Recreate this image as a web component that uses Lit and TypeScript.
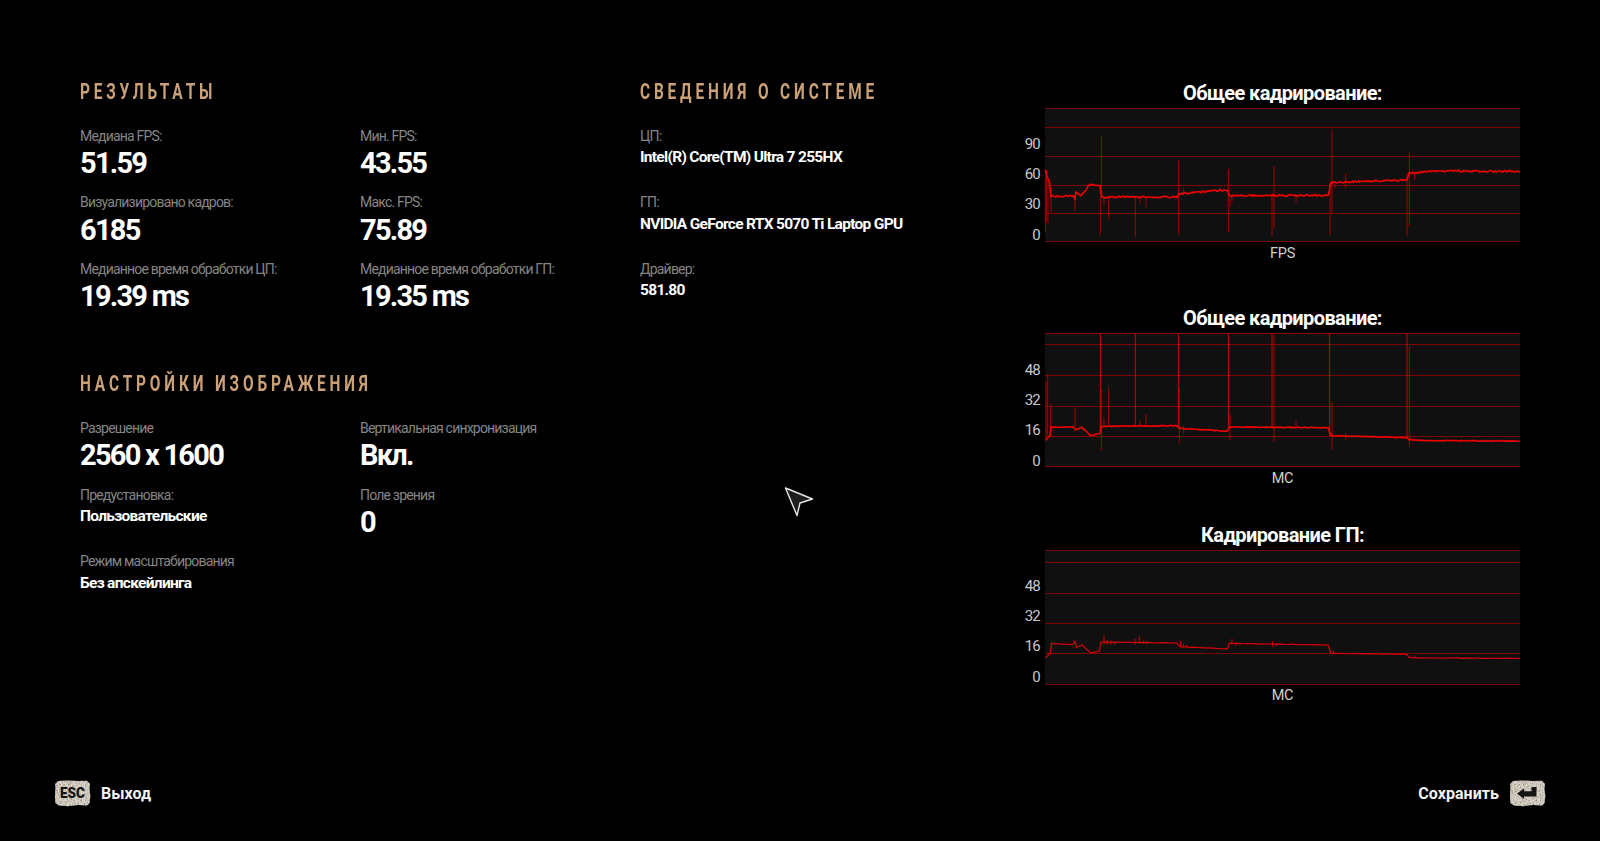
import { LitElement, css, html, svg } from 'lit';
import { customElement } from 'lit/decorators.js';

type Pt = [number, number];
type Spike = [number, number, number];

interface ChartData {
  title: string;
  unit: string;
  grid: number[];
  ticks: [string, number][];
  line: Pt[];
  noise: number;
  lineClass: string;
  spikes: Spike[];
  bright: Spike[];
  gap: string;
}

// the points below were read off the reference in 3x zoom coordinates
const zx = (x: number) => (x - 75) / 3;
const zy = (y: number, top: number) => (y - top) / 3;
const pts = (raw: number[][], top: number): Pt[] => raw.map(([x, y]) => [zx(x), zy(y, top)]);
const spk = (raw: number[][], top: number): Spike[] =>
  raw.map(([x, a, b]) => [zx(x), zy(a, top), zy(b, top)]);

const charts: ChartData[] = [
  {
    title: 'Общее кадрирование:',
    unit: 'FPS',
    grid: [0, 19, 48, 77, 105, 133],
    ticks: [['90', 41], ['60', 71], ['30', 101], ['0', 132]],
    line: pts([[76, 298], [80, 318], [88, 335], [93, 378], [160, 378], [165, 386], [167, 367], [185, 376], [210, 343], [240, 349], [244, 381], [470, 381], [478, 371], [622, 360], [628, 377], [925, 376], [932, 338], [1160, 330], [1168, 310], [1230, 303], [1500, 304]], 114),
    noise: 0.9,
    lineClass: 'line',
    spikes: spk([[244, 198, 380], [241, 380, 495], [252, 380, 405], [266, 380, 448], [346, 380, 500], [360, 380, 400], [378, 380, 412], [476, 272, 495], [491, 355, 375], [625, 298, 485], [630, 380, 410], [636, 378, 395], [756, 370, 498], [762, 288, 475], [828, 378, 398], [930, 340, 495], [936, 177, 430], [945, 335, 355], [977, 310, 355], [1161, 310, 498], [1168, 248, 470], [1183, 310, 330], [93, 350, 430], [165, 385, 422], [80, 300, 455], [76, 320, 485], [84, 330, 460]], 114),
    bright: [],
    gap: 'loose',
  },
  {
    title: 'Общее кадрирование:',
    unit: 'МС',
    grid: [0, 11, 42, 73, 103, 133],
    ticks: [['48', 42], ['32', 72], ['16', 102], ['0', 133]],
    line: pts([[76, 436], [90, 422], [93, 396], [160, 396], [166, 404], [186, 397], [212, 422], [240, 416], [243, 394], [470, 392], [480, 400], [622, 409], [628, 396], [925, 398], [932, 422], [1160, 428], [1168, 434], [1230, 437], [1500, 438]], 114),
    noise: 0.4,
    lineClass: 'line',
    spikes: spk([[266, 277, 396], [244, 285, 465], [165, 338, 396], [92, 325, 396], [83, 237, 420], [78, 260, 430], [252, 370, 396], [360, 375, 396], [378, 357, 396], [478, 277, 445], [491, 390, 416], [630, 360, 435], [828, 378, 396], [936, 320, 465], [977, 415, 435], [1168, 155, 455], [762, 120, 440]], 114),
    bright: spk([[241, 114, 400], [346, 114, 396], [475, 114, 400], [625, 114, 400], [756, 114, 400], [929, 114, 422], [1161, 114, 430]], 114),
    gap: '',
  },
  {
    title: 'Кадрирование ГП:',
    unit: 'МС',
    grid: [0, 12, 43, 73, 103, 134],
    ticks: [['48', 41], ['32', 71], ['16', 101], ['0', 132]],
    line: pts([[76, 412], [90, 398], [95, 368], [158, 372], [165, 362], [170, 380], [186, 373], [212, 397], [238, 392], [243, 364], [470, 367], [480, 378], [622, 385], [628, 368], [925, 373], [932, 398], [1160, 401], [1168, 411], [1230, 412], [1500, 413]], 88),
    noise: 0.25,
    lineClass: 'line thin',
    spikes: [],
    bright: spk([[252, 346, 370], [262, 358, 372], [272, 362, 372], [283, 365, 372], [345, 355, 372], [358, 348, 368], [370, 360, 370], [380, 362, 370], [482, 360, 378], [490, 370, 378], [500, 372, 380], [636, 355, 372], [648, 365, 375], [660, 366, 374], [758, 362, 378], [770, 368, 376], [940, 390, 400], [1184, 404, 412]], 88),
    gap: '',
  },
];

// small seeded generator so that the noise on the lines stays the same between runs
const noiseAt = (i: number) => {
  const s = Math.sin(i * 127.1 + 11.7) * 43758.5453;
  return s - Math.floor(s) - 0.5;
};

const tracePath = (line: Pt[], noise: number) => {
  const out: string[] = [];
  let n = 0;
  for (let i = 0; i < line.length - 1; i++) {
    const [x0, y0] = line[i];
    const [x1, y1] = line[i + 1];
    const steps = Math.max(1, Math.round((x1 - x0) / 1.2));
    for (let s = 0; s < steps; s++) {
      const t = s / steps;
      out.push(`${(x0 + (x1 - x0) * t).toFixed(1)},${(y0 + (y1 - y0) * t + noiseAt(n++) * noise * 2).toFixed(1)}`);
    }
  }
  const last = line[line.length - 1];
  out.push(`${last[0].toFixed(1)},${last[1].toFixed(1)}`);
  return out.join(' ');
};

const results = [
  { label: 'Медиана FPS:', value: '51.59' },
  { label: 'Мин. FPS:', value: '43.55' },
  { label: 'Визуализировано кадров:', value: '6185' },
  { label: 'Макс. FPS:', value: '75.89' },
  { label: 'Медианное время обработки ЦП:', value: '19.39 ms' },
  { label: 'Медианное время обработки ГП:', value: '19.35 ms' },
];

const settings = [
  { label: 'Разрешение', value: '2560 x 1600' },
  { label: 'Вертикальная синхронизация', value: 'Вкл.' },
  { label: 'Предустановка:', value: 'Пользовательские', small: true },
  { label: 'Поле зрения', value: '0' },
  { label: 'Режим масштабирования', value: 'Без апскейлинга', small: true },
];

const system = [
  { label: 'ЦП:', value: 'Intel(R) Core(TM) Ultra 7 255HX', small: true },
  { label: 'ГП:', value: 'NVIDIA GeForce RTX 5070 Ti Laptop GPU', small: true },
  { label: 'Драйвер:', value: '581.80', small: true },
];

@customElement('app-root')
export class AppRoot extends LitElement {
  static styles = css`
    :host {
      display: block;
      position: relative;
      width: 1600px;
      height: 841px;
      background: #000;
      overflow: hidden;
      font-family: Roboto, "Liberation Sans", sans-serif;
      color: #fff;
    }

    .screen {
      height: 100%;
      box-sizing: border-box;
      display: flex;
      flex-direction: column;
      justify-content: space-between;
      padding: 78px 54px 34px 54px;
    }

    .columns {
      display: grid;
      grid-template-columns: 560px 380px 500px;
      padding-left: 26px;
    }

    h2 {
      margin: 1px 0 0;
      height: 26px;
      line-height: 26px;
      font-weight: 700;
      font-size: 22px;
      letter-spacing: 5.5px;
      color: #c9a077;
      white-space: nowrap;
      transform: scaleX(0.7);
      transform-origin: left center;
    }

    .section + .section {
      margin-top: 46px;
    }

    .fields {
      display: grid;
      grid-template-columns: 280px 1fr;
      grid-auto-rows: 66.67px;
      margin-top: 20.5px;
    }

    .single {
      grid-template-columns: 1fr;
    }

    .label {
      height: 20.5px;
      line-height: 20px;
      font-size: 14px;
      letter-spacing: -0.8px;
      color: #858585;
      white-space: nowrap;
    }

    .value {
      height: 34px;
      line-height: 34px;
      font-size: 29px;
      font-weight: 700;
      letter-spacing: -1.75px;
      white-space: nowrap;
    }

    .value.small {
      height: 24px;
      line-height: 23px;
      font-size: 15.5px;
      letter-spacing: -0.7px;
    }

    .charts {
      display: flex;
      flex-direction: column;
      gap: 30px;
    }

    .chart.loose {
      margin-bottom: 8px;
    }

    .chart-title {
      height: 30px;
      line-height: 30px;
      padding-left: 25px;
      text-align: center;
      font-size: 20px;
      font-weight: 700;
      letter-spacing: -0.6px;
    }

    .plot {
      display: block;
      overflow: visible;
    }

    .plot .bg {
      fill: #101010;
    }

    .plot .grid {
      stroke: #780808;
      stroke-width: 1;
    }

    .plot .tick {
      fill: #c8c8c8;
      font-size: 15px;
      letter-spacing: -0.8px;
      text-anchor: end;
    }

    .plot .spike {
      stroke: #a00404;
      stroke-width: 1;
    }

    .plot .spike.bright {
      stroke: #d80000;
    }

    .plot .line {
      fill: none;
      stroke: #f00000;
      stroke-width: 1.6;
      stroke-linejoin: round;
    }

    .plot .line.thin {
      stroke: #d80008;
      stroke-width: 1.2;
    }

    .unit {
      height: 22px;
      line-height: 22px;
      padding-left: 25px;
      text-align: center;
      font-size: 14.5px;
      letter-spacing: -0.2px;
      color: #d0d0d0;
    }

    .footer {
      display: flex;
      justify-content: space-between;
      align-items: center;
    }

    .action {
      display: flex;
      align-items: center;
      gap: 10px;
      font-size: 16px;
      font-weight: 700;
      letter-spacing: 0.05px;
      color: #f2f2f2;
    }

    .cap {
      display: block;
      overflow: visible;
    }

    .cap text {
      font-size: 14px;
      font-weight: 900;
      fill: #141414;
      text-anchor: middle;
    }

    .cursor {
      position: absolute;
      left: 780px;
      top: 483px;
    }
  `;

  private renderField(f: { label: string; value: string; small?: boolean }) {
    return html`
      <div class="field">
        <div class="label">${f.label}</div>
        <div class="value ${f.small ? 'small' : ''}">${f.value}</div>
      </div>
    `;
  }

  private renderChart(c: ChartData) {
    return html`
      <div class="chart ${c.gap}">
        <div class="chart-title">${c.title}</div>
        <svg class="plot" width="500" height="135" viewBox="0 0 500 135">
          ${c.ticks.map(([t, y]) => svg`<text class="tick" x="20" y=${y}>${t}</text>`)}
          <g transform="translate(25 0)">
            <rect class="bg" width="475" height="134"></rect>
            ${c.grid.map((y) => svg`<line class="grid" x1="0" x2="475" y1=${y + 0.5} y2=${y + 0.5}></line>`)}
            ${c.spikes.map(([x, a, b]) => svg`<line class="spike" x1=${x} x2=${x} y1=${a} y2=${b}></line>`)}
            ${c.bright.map(([x, a, b]) => svg`<line class="spike bright" x1=${x} x2=${x} y1=${a} y2=${b}></line>`)}
            <polyline class=${c.lineClass} points=${tracePath(c.line, c.noise)}></polyline>
          </g>
        </svg>
        <div class="unit">${c.unit}</div>
      </div>
    `;
  }

  private renderCap(id: string, inner: unknown) {
    return html`
      <svg class="cap" width="37" height="27" viewBox="0 0 37 27">
        <defs>
          <filter id=${id} x="0" y="0" width="100%" height="100%">
            <feTurbulence type="fractalNoise" baseFrequency="0.7" numOctaves="3" seed="4"></feTurbulence>
            <feColorMatrix values="0 0 0 0 0.3  0 0 0 0 0.27  0 0 0 0 0.22  2.6 0 0 0 -1.05"></feColorMatrix>
            <feComposite in2="SourceAlpha" operator="in" result="speck"></feComposite>
            <feMerge>
              <feMergeNode in="SourceGraphic"></feMergeNode>
              <feMergeNode in="speck"></feMergeNode>
            </feMerge>
          </filter>
        </defs>
        <path
          fill="#dcd7ca"
          filter="url(#${id})"
          d="M4 1 L13 .5 L24 1 L33 .7 L36 4 L35.4 9 L36.4 16 L35.6 23 L33 25.4 L24 25 L14 26.2 L5 25.4 L1.4 23 L.9 15 L1.5 8 L1 4 Z"
        ></path>
        ${inner}
      </svg>
    `;
  }

  render() {
    return html`
      <div class="screen">
        <div class="columns">
          <div>
            <section class="section">
              <h2>РЕЗУЛЬТАТЫ</h2>
              <div class="fields">${results.map((f) => this.renderField(f))}</div>
            </section>
            <section class="section">
              <h2>НАСТРОЙКИ ИЗОБРАЖЕНИЯ</h2>
              <div class="fields">${settings.map((f) => this.renderField(f))}</div>
            </section>
          </div>
          <section class="section">
            <h2>СВЕДЕНИЯ О СИСТЕМЕ</h2>
            <div class="fields single">${system.map((f) => this.renderField(f))}</div>
          </section>
          <div class="charts">${charts.map((c) => this.renderChart(c))}</div>
        </div>
        <div class="footer">
          <div class="action">
            ${this.renderCap('stone-esc', svg`<text x="18.5" y="18" textLength="25" lengthAdjust="spacingAndGlyphs">ESC</text>`)}
            <span>Выход</span>
          </div>
          <div class="action">
            <span>Сохранить</span>
            ${this.renderCap('stone-enter', svg`<path fill="#141414" d="M8 13.5 L15 8.5 V11.2 H22.5 V7 H27.5 V16.5 H15 V19 Z"></path>`)}
          </div>
        </div>
      </div>
      <svg class="cursor" width="36" height="36" viewBox="0 0 36 36">
        <path
          d="M5.5 5 L32.5 16 L20 20 L17 32.5 Z"
          fill="#1e1e1e"
          stroke="#e6e6e6"
          stroke-width="1.4"
          stroke-linejoin="round"
        ></path>
      </svg>
    `;
  }
}

declare global {
  interface HTMLElementTagNameMap {
    'app-root': AppRoot;
  }
}
